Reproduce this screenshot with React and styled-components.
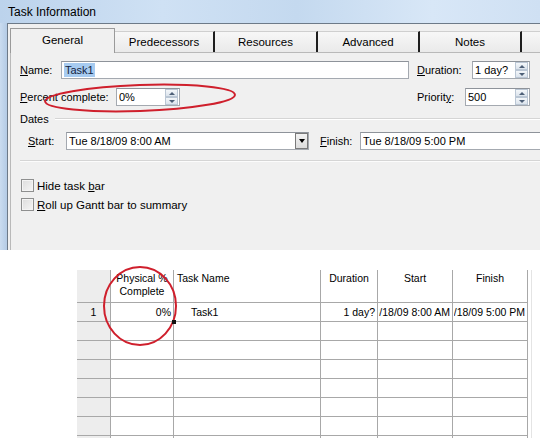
import React from 'react';
import styled, { createGlobalStyle } from 'styled-components';

const GlobalStyle = createGlobalStyle`
  html, body {
    margin: 0;
    padding: 0;
    background: #fff;
  }
  body {
    font-family: "Liberation Sans", Arial, sans-serif;
    color: #000;
  }
`;

const Page = styled.div`
  position: relative;
  width: 540px;
  height: 438px;
  overflow: hidden;
  background: #fff;
`;

const Window = styled.div`
  display: flex;
  flex-direction: column;
  height: 250px;
`;

const TitleBar = styled.div`
  height: 23px;
  padding-left: 8px;
  display: flex;
  align-items: center;
  font-size: 12px;
  background: linear-gradient(
    90deg,
    #bcd3ec 0%,
    #cfe1f4 30%,
    #c4d9ef 55%,
    #d8e7f7 80%,
    #cfe0f3 100%
  );
`;

const FrameBody = styled.div`
  flex: 1;
  display: flex;
  min-height: 0;
`;

const SideFrame = styled.div`
  width: 7px;
  flex: none;
  background: linear-gradient(90deg, #cadcf0, #b4cbe5);
`;

const Client = styled.div`
  flex: 1;
  display: flex;
  flex-direction: column;
  min-width: 0;
  background: #f0f0f0;
  border-left: 1px solid #6d7a88;
  border-top: 1px solid #6d7a88;
  padding-left: 2px;
  font-size: 11px;
`;

const TabStrip = styled.div`
  height: 28px;
  display: flex;
  align-items: flex-end;
  flex: none;
`;

const Tab = styled.div`
  width: ${(p) => p.$w}px;
  height: ${(p) => (p.$active ? 25 : 21)}px;
  margin-bottom: ${(p) => (p.$active ? -1 : 0)}px;
  box-sizing: border-box;
  flex: none;
  display: flex;
  align-items: center;
  justify-content: center;
  white-space: nowrap;
  position: relative;
  z-index: ${(p) => (p.$active ? 1 : 0)};
  font-size: 11.5px;
  background: ${(p) =>
    p.$active ? '#f0f0f0' : 'linear-gradient(#f7f7f7, #eaeaea)'};
  border: ${(p) => (p.$active ? '1px solid #9a9a9a' : 'none')};
  border-bottom: none;
  border-top: 1px solid ${(p) => (p.$active ? '#9a9a9a' : '#cfcfcf')};
  border-right: ${(p) => (p.$active ? '1px solid #9a9a9a' : '2px solid #1e1e1e')};
  padding-bottom: ${(p) => (p.$active ? 2 : 0)}px;
`;

const TabPage = styled.div`
  flex: 1;
  border-top: 1px solid #b9b9b9;
  border-left: 1px solid #b9b9b9;
  padding: 8px 10px 0 9px;
  overflow: hidden;
`;

const Row = styled.div`
  display: flex;
  align-items: center;
  height: ${(p) => p.$h || 18}px;
  margin-top: ${(p) => p.$mt || 0}px;
  padding-left: ${(p) => p.$pl || 0}px;
`;

const Label = styled.span`
  width: ${(p) => p.$w}px;
  margin-left: ${(p) => p.$ml || 0}px;
  flex: none;
  white-space: nowrap;
`;

const Key = styled.span`
  text-decoration: underline;
`;

const Spacer = styled.div`
  flex: 1;
`;

const TextBox = styled.div`
  width: ${(p) => p.$w}px;
  height: 18px;
  flex: none;
  box-sizing: border-box;
  border: 1px solid #a4a9b0;
  border-top-color: #8e939a;
  background: #fff;
  display: flex;
  align-items: center;
  padding-left: 2px;
  white-space: nowrap;
  overflow: hidden;
`;

const Value = styled.span`
  flex: 1;
  overflow: hidden;
`;

const Selected = styled.span`
  background: #a7cbf0;
  color: #14233f;
  padding: 1px 1px;
`;

const SpinButtons = styled.div`
  width: 13px;
  height: 16px;
  margin-right: 1px;
  display: flex;
  flex-direction: column;
  flex: none;
`;

const SpinButton = styled.div`
  flex: 1;
  box-sizing: border-box;
  border: 1px solid #bac6d4;
  background: linear-gradient(#f4f7fa, #dbe3ec);
  display: flex;
  align-items: center;
  justify-content: center;
  &::after {
    content: '';
    border-left: 3px solid transparent;
    border-right: 3px solid transparent;
    ${(p) =>
      p.$down
        ? 'border-top: 3px solid #4d5f77;'
        : 'border-bottom: 3px solid #4d5f77;'}
  }
`;

const DropButton = styled.div`
  width: 13px;
  height: 16px;
  flex: none;
  box-sizing: border-box;
  border: 1px solid #7a7a7a;
  background: linear-gradient(#f2f2f2, #dcdcdc);
  display: flex;
  align-items: center;
  justify-content: center;
  &::after {
    content: '';
    border-left: 3px solid transparent;
    border-right: 3px solid transparent;
    border-top: 4px solid #000;
  }
`;

const GroupLine = styled.div`
  flex: 1;
  margin-left: 6px;
  margin-right: -10px;
  border-top: 1px solid #d5d5d5;
  border-bottom: 1px solid #fff;
`;

const Separator = styled.div`
  margin-top: 10px;
  margin-right: -10px;
  border-top: 1px solid #d5d5d5;
  border-bottom: 1px solid #fcfcfc;
`;

const CheckBox = styled.div`
  width: 13px;
  height: 13px;
  box-sizing: border-box;
  margin-left: 1px;
  border: 1px solid #8e8f8f;
  background: linear-gradient(135deg, #dcdcdc, #f6f6f6);
  box-shadow: inset 0 0 0 1px #f4f4f4;
  flex: none;
`;

const CheckLabel = styled.span`
  margin-left: 3px;
  white-space: nowrap;
  font-size: 11.5px;
`;

const Sheet = styled.div`
  margin: 20px 0 0 77px;
  width: 452px;
  display: grid;
  grid-template-columns: 34px 63px 147px 57px 75px 75px;
  grid-template-rows: 33px;
  grid-auto-rows: 19px;
  font-size: 10.5px;
  box-shadow: 2px 0 0 #fff, 3px 0 0 #e4e4e4;
`;

const HeadCell = styled.div`
  box-sizing: border-box;
  border-right: 1px solid #a8a8a8;
  border-bottom: 1px solid #a8a8a8;
  background: ${(p) => (p.$corner ? '#ededed' : '#fff')};
  padding: 2px 3px 0;
  text-align: ${(p) => p.$align || 'center'};
  line-height: 13px;
  white-space: nowrap;
`;

const RowHead = styled.div`
  box-sizing: border-box;
  border-right: 1px solid #a8a8a8;
  border-bottom: 1px solid #a8a8a8;
  background: #ededed;
  display: flex;
  align-items: center;
  justify-content: center;
`;

const Cell = styled.div`
  position: relative;
  box-sizing: border-box;
  border-right: 1px solid #a8a8a8;
  border-bottom: 1px solid #a8a8a8;
  display: flex;
  align-items: center;
  justify-content: ${(p) => (p.$align === 'left' ? 'flex-start' : 'flex-end')};
  padding: 0 ${(p) => (p.$align === 'left' ? 0 : 2)}px 0
    ${(p) => p.$indent || 3}px;
  white-space: nowrap;
  overflow: ${(p) => (p.$handle ? 'visible' : 'hidden')};
`;

const Clip = styled.div`
  flex: 1;
  min-width: 0;
  overflow: hidden;
  display: flex;
  justify-content: flex-end;
`;

const CellText = styled.span`
  flex: none;
`;

const FillHandle = styled.div`
  position: absolute;
  right: -3px;
  bottom: -3px;
  width: 4px;
  height: 4px;
  background: #111;
  z-index: 2;
`;

const Annotations = styled.svg`
  position: absolute;
  left: 0;
  top: 0;
  pointer-events: none;
`;

const tabs = [
  { label: 'General', w: 105, active: true },
  { label: 'Predecessors', w: 100 },
  { label: 'Resources', w: 103 },
  { label: 'Advanced', w: 102 },
  { label: 'Notes', w: 102 },
  { label: '', w: 30 },
];

const rows = [
  {
    id: '1',
    pct: '0%',
    name: 'Task1',
    duration: '1 day?',
    start: 'Tue 8/18/09 8:00 AM',
    finish: 'Tue 8/18/09 5:00 PM',
  },
  {}, {}, {}, {}, {}, {}, {},
];

function Spin({ w, value }) {
  return (
    <TextBox $w={w}>
      <Value>{value}</Value>
      <SpinButtons>
        <SpinButton />
        <SpinButton $down />
      </SpinButtons>
    </TextBox>
  );
}

export default function App() {
  return (
    <Page>
      <GlobalStyle />
      <Window>
        <TitleBar>Task Information</TitleBar>
        <FrameBody>
          <SideFrame />
          <Client>
            <TabStrip>
              {tabs.map((t, i) => (
                <Tab key={i} $w={t.w} $active={t.active}>
                  {t.label}
                </Tab>
              ))}
            </TabStrip>
            <TabPage>
              <Row>
                <Label $w={41}>
                  <Key>N</Key>ame:
                </Label>
                <TextBox $w={348}>
                  <Selected>Task1</Selected>
                </TextBox>
                <Spacer />
                <Label $w={55}>
                  <Key>D</Key>uration:
                </Label>
                <Spin w={58} value="1 day?" />
              </Row>
              <Row $mt={9}>
                <Label $w={96}>
                  <Key>P</Key>ercent complete:
                </Label>
                <Spin w={64} value="0%" />
                <Spacer />
                <Label $w={48}>
                  Priorit<Key>y</Key>:
                </Label>
                <Spin w={65} value="500" />
              </Row>
              <Row $mt={6} $h={14}>
                <span>Dates</span>
                <GroupLine />
              </Row>
              <Row $mt={6} $pl={8}>
                <Label $w={38}>
                  <Key>S</Key>tart:
                </Label>
                <TextBox $w={243}>
                  <Value>Tue 8/18/09 8:00 AM</Value>
                  <DropButton />
                </TextBox>
                <Label $w={40} $ml={11}>
                  <Key>F</Key>inish:
                </Label>
                <TextBox $w={200}>
                  <Value>Tue 8/18/09 5:00 PM</Value>
                </TextBox>
              </Row>
              <Separator />
              <Row $mt={17} $h={13}>
                <CheckBox />
                <CheckLabel>
                  Hide task <Key>b</Key>ar
                </CheckLabel>
              </Row>
              <Row $mt={6} $h={13}>
                <CheckBox />
                <CheckLabel>
                  <Key>R</Key>oll up Gantt bar to summary
                </CheckLabel>
              </Row>
            </TabPage>
          </Client>
        </FrameBody>
      </Window>

      <Sheet>
        <HeadCell $corner />
        <HeadCell>
          Physical %
          <br />
          Complete
        </HeadCell>
        <HeadCell $align="left">Task Name</HeadCell>
        <HeadCell>Duration</HeadCell>
        <HeadCell>Start</HeadCell>
        <HeadCell>Finish</HeadCell>
        {rows.map((r, i) => (
          <React.Fragment key={i}>
            <RowHead>{r.id}</RowHead>
            <Cell $handle={i === 0}>
              <CellText>{r.pct}</CellText>
              {i === 0 && <FillHandle />}
            </Cell>
            <Cell $align="left" $indent={17}>
              <CellText>{r.name}</CellText>
            </Cell>
            <Cell>
              <CellText>{r.duration}</CellText>
            </Cell>
            <Cell $indent={1}>
              <Clip>
                <CellText>{r.start}</CellText>
              </Clip>
            </Cell>
            <Cell $indent={1}>
              <Clip>
                <CellText>{r.finish}</CellText>
              </Clip>
            </Cell>
          </React.Fragment>
        ))}
      </Sheet>

      <Annotations width="540" height="438" viewBox="0 0 540 438">
        <ellipse
          cx="140"
          cy="98"
          rx="95"
          ry="13"
          transform="rotate(-2 140 98)"
          fill="none"
          stroke="#cf1f2c"
          strokeWidth="2"
        />
        <ellipse
          cx="140"
          cy="306"
          rx="36"
          ry="39"
          fill="none"
          stroke="#cf1f2c"
          strokeWidth="2"
        />
      </Annotations>
    </Page>
  );
}
